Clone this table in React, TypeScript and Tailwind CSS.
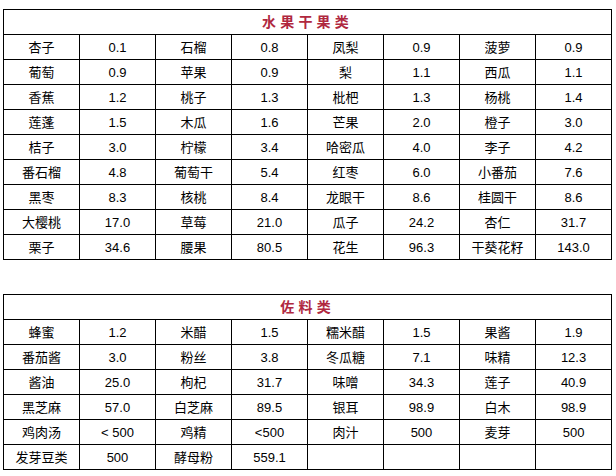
const FRUITS: [string, string][] = [
  ["杏子", "0.1"], ["石榴", "0.8"], ["凤梨", "0.9"], ["菠萝", "0.9"],
  ["葡萄", "0.9"], ["苹果", "0.9"], ["梨", "1.1"], ["西瓜", "1.1"],
  ["香蕉", "1.2"], ["桃子", "1.3"], ["枇杷", "1.3"], ["杨桃", "1.4"],
  ["莲蓬", "1.5"], ["木瓜", "1.6"], ["芒果", "2.0"], ["橙子", "3.0"],
  ["桔子", "3.0"], ["柠檬", "3.4"], ["哈密瓜", "4.0"], ["李子", "4.2"],
  ["番石榴", "4.8"], ["葡萄干", "5.4"], ["红枣", "6.0"], ["小番茄", "7.6"],
  ["黑枣", "8.3"], ["核桃", "8.4"], ["龙眼干", "8.6"], ["桂圆干", "8.6"],
  ["大樱桃", "17.0"], ["草莓", "21.0"], ["瓜子", "24.2"], ["杏仁", "31.7"],
  ["栗子", "34.6"], ["腰果", "80.5"], ["花生", "96.3"], ["干葵花籽", "143.0"],
];

const SEASONINGS: [string, string][] = [
  ["蜂蜜", "1.2"], ["米醋", "1.5"], ["糯米醋", "1.5"], ["果酱", "1.9"],
  ["番茄酱", "3.0"], ["粉丝", "3.8"], ["冬瓜糖", "7.1"], ["味精", "12.3"],
  ["酱油", "25.0"], ["枸杞", "31.7"], ["味噌", "34.3"], ["莲子", "40.9"],
  ["黑芝麻", "57.0"], ["白芝麻", "89.5"], ["银耳", "98.9"], ["白木", "98.9"],
  ["鸡肉汤", "< 500"], ["鸡精", "<500"], ["肉汁", "500"], ["麦芽", "500"],
  ["发芽豆类", "500"], ["酵母粉", "559.1"], ["", ""], ["", ""],
];

function chunk(items: [string, string][]) {
  const rows: [string, string][][] = [];
  for (let i = 0; i < items.length; i += 4) rows.push(items.slice(i, i + 4));
  return rows;
}

function FoodTable({ title, items }: { title: string; items: [string, string][] }) {
  return (
    <table className="table-fixed border-collapse w-[609px] text-[13px] text-black">
      <colgroup>
        {Array.from({ length: 8 }).map((_, i) => (
          <col key={i} className="w-[76px]" />
        ))}
      </colgroup>
      <tbody>
        <tr className="h-[25px]">
          <td colSpan={8} className="border border-black text-center font-bold text-[14px] tracking-[0.3em] text-[#b0283f] p-0 leading-none">
            {title}
          </td>
        </tr>
        {chunk(items).map((row, r) => (
          <tr key={r} className="h-[25px]">
            {row.map(([name, val], c) => (
              <>
                <td key={`n${c}`} className="border border-black text-center p-0 leading-none">{name}</td>
                <td key={`v${c}`} className="border border-black text-center p-0 leading-none">{val}</td>
              </>
            ))}
          </tr>
        ))}
      </tbody>
    </table>
  );
}

export default function App() {
  return (
    <div
      className="bg-white w-[616px] h-[476px] pl-[3px] pt-[9px] flex flex-col gap-[34px]"
      style={{ fontFamily: '"Liberation Sans", Arial, "Noto Sans CJK SC", sans-serif' }}
    >
      <FoodTable title="水果干果类" items={FRUITS} />
      <FoodTable title="佐料类" items={SEASONINGS} />
    </div>
  );
}
